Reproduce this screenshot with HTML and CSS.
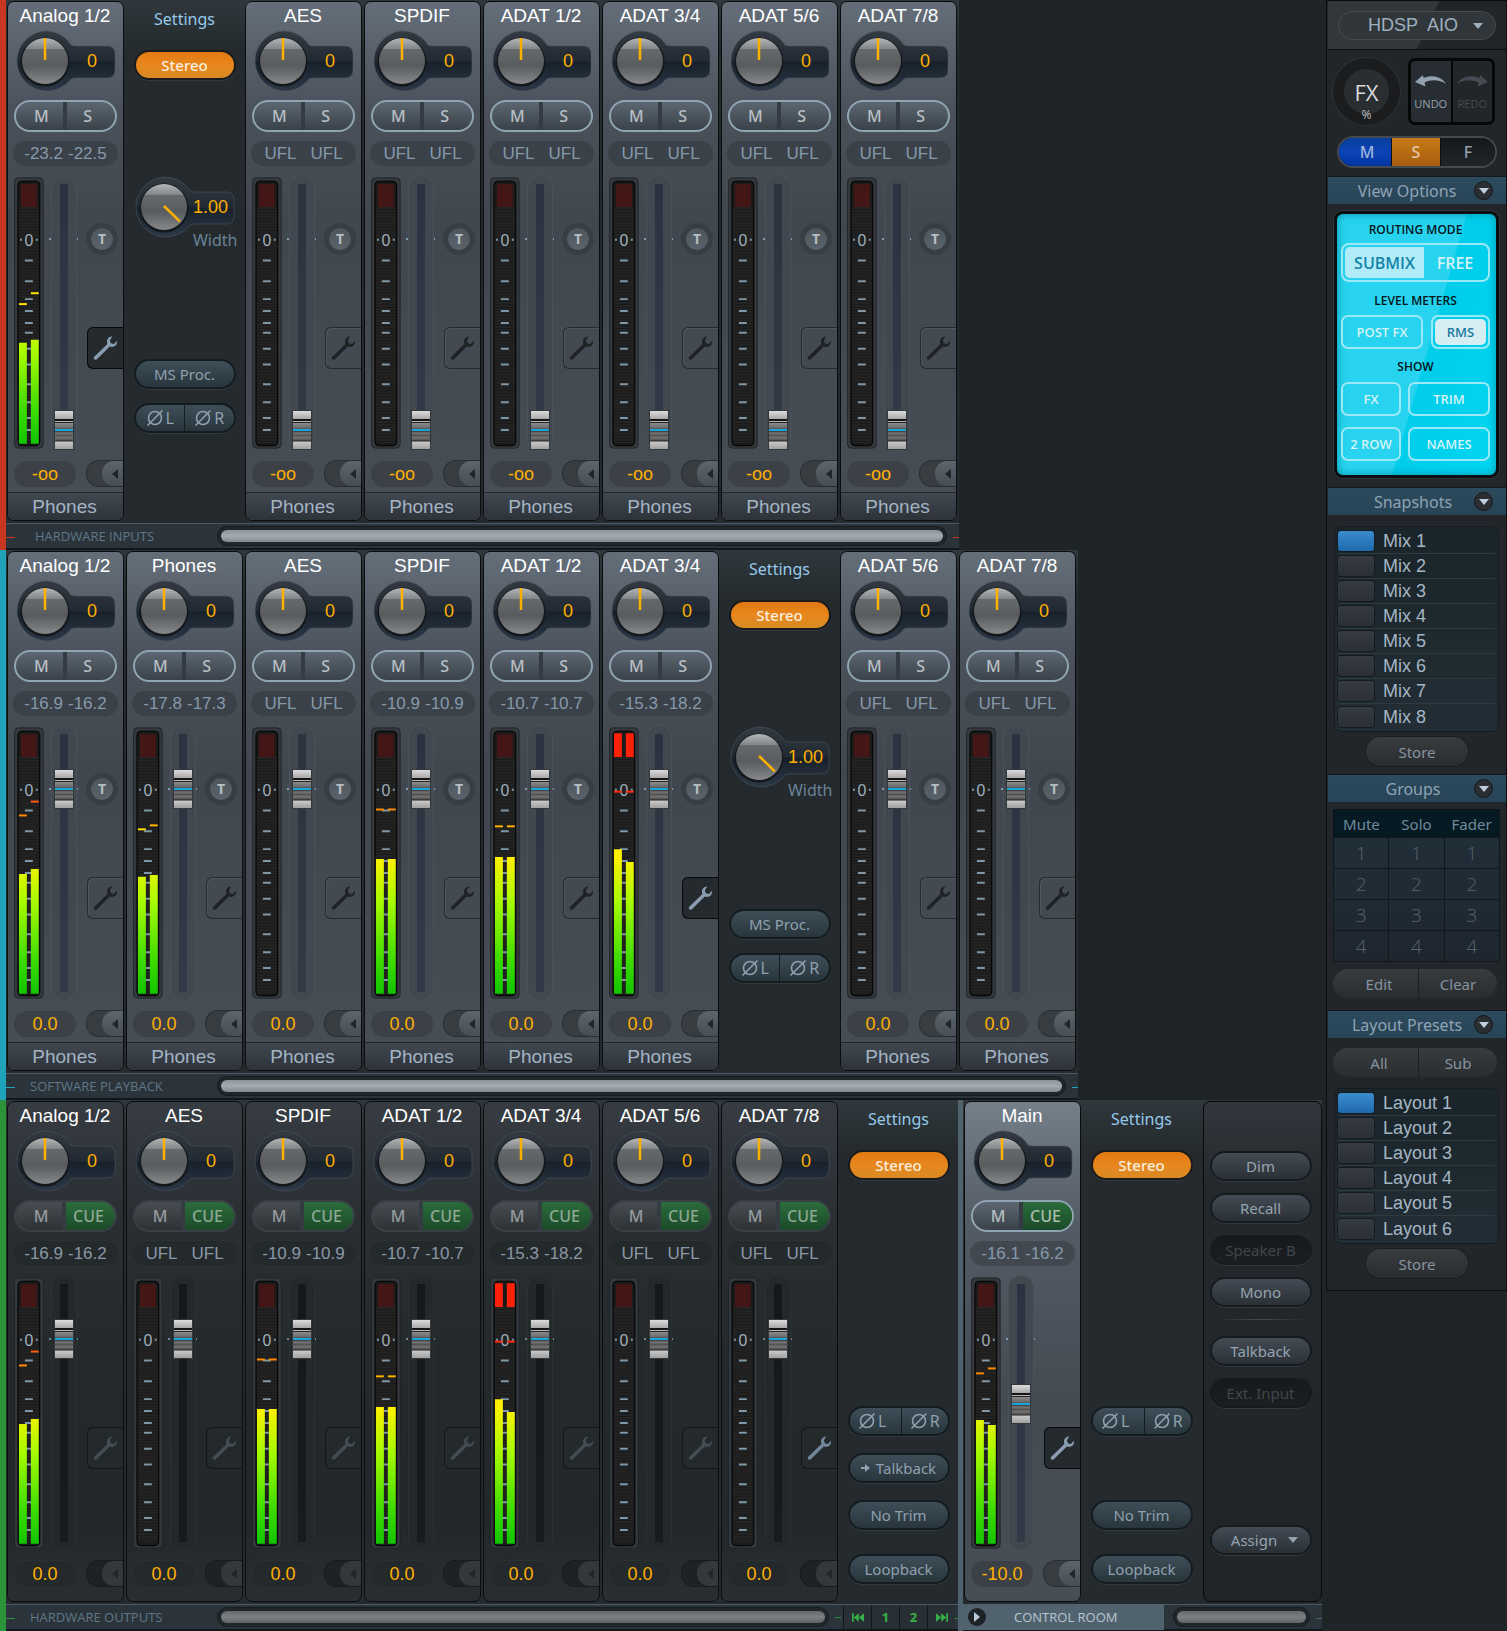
FILE: index.html
```html
<!DOCTYPE html>
<html lang="en">
<head>
<meta charset="utf-8">
<title>HDSP AIO Mixer</title>
<link rel="stylesheet" href="styles.css">
</head>
<body>
<svg class="defs" aria-hidden="true">
  <defs>
    <linearGradient id="g-level" gradientUnits="userSpaceOnUse" x1="0" y1="100" x2="0" y2="269">
      <stop offset="0" stop-color="#ffe600"/><stop offset=".18" stop-color="#fff000"/><stop offset=".45" stop-color="#a8fa00"/><stop offset=".8" stop-color="#3ddc00"/><stop offset="1" stop-color="#12c400"/>
    </linearGradient>
    <linearGradient id="g-knob" x1="0" y1="0" x2="0" y2="1">
      <stop offset="0" stop-color="#b4b6b7"/><stop offset=".23" stop-color="#83878a"/><stop offset=".25" stop-color="#65696c"/><stop offset=".6" stop-color="#585c5f"/><stop offset="1" stop-color="#868889"/>
    </linearGradient>
    <linearGradient id="g-socket" x1="0" y1="0" x2="0" y2="1">
      <stop offset="0" stop-color="#343a42"/><stop offset=".5" stop-color="#212932"/><stop offset=".52" stop-color="#18212a"/><stop offset="1" stop-color="#2c3848"/>
    </linearGradient>
    <pattern id="p-lines" width="22" height="3" patternUnits="userSpaceOnUse"><path d="M0 1h22" stroke="#2c2c2c"/></pattern>
    <symbol id="i-wrench" viewBox="0 0 26 26"><path d="M20 .5c-4 0-6.500 3.500-5 7.800L1.300 21.500c-1.600 2 .7 4.300 2.700 2.700L17.500 11c4 1.500 8-1 7.500-6l-3.300 3.300-3.200-.7-.9-3.200z"/></symbol>
    <symbol id="i-phase" viewBox="0 0 18 18"><circle cx="9" cy="9" r="6.500" fill="none" stroke="currentColor" stroke-width="1.600"/><path d="M1.500 16.500l15-15" stroke="currentColor" stroke-width="1.600"/></symbol>
    <symbol id="i-left" viewBox="0 0 8 10"><path d="M7 0v10L1 5z"/></symbol>
    <symbol id="i-down" viewBox="0 0 10 6"><path d="M0 0h10L5 6z"/></symbol>
    <symbol id="i-undo" viewBox="0 0 32 14"><path d="M0 8L8 1l.5 3C18 0 27 3 31 10 25 6 17 5 9.500 8.500l1 4z"/></symbol>
    <symbol id="i-prev" viewBox="0 0 14 10"><path d="M0 0h2v10H0zM8 0v10L2 5zM14 0v10L8 5z"/></symbol>
  </defs>
</svg>

<main class="mixer">
  <section class="bank inputs" aria-label="Hardware inputs">
    <div class="strips" id="inputs"></div>
    <footer class="bar"><h2>HARDWARE INPUTS</h2><div class="scroll"><span></span></div></footer>
  </section>

  <section class="bank playback" aria-label="Software playback">
    <div class="strips" id="playback"></div>
    <footer class="bar"><h2>SOFTWARE PLAYBACK</h2><div class="scroll"><span></span></div></footer>
  </section>

  <div class="bottom-row">
    <section class="bank outputs" aria-label="Hardware outputs">
      <div class="strips" id="outputs"></div>
      <footer class="bar"><h2>HARDWARE OUTPUTS</h2><div class="scroll"><span></span></div>
        <nav class="pager">
          <button aria-label="First"><svg width="12" height="9"><use href="#i-prev"/></svg></button>
          <button>1</button><button>2</button>
          <button aria-label="Last"><svg class="flip" width="12" height="9"><use href="#i-prev"/></svg></button>
        </nav>
      </footer>
    </section>

    <section class="bank control" aria-label="Control room">
      <div class="strips"><div class="slot" id="main"></div>
        <aside class="panel">
          <button class="pill grey">Dim</button>
          <button class="pill grey">Recall</button>
          <button class="pill grey" disabled>Speaker B</button>
          <button class="pill grey">Mono</button>
          <hr>
          <button class="pill grey">Talkback</button>
          <button class="pill grey" disabled>Ext. Input</button>
          <button class="pill grey assign">Assign <svg width="10" height="6"><use href="#i-down"/></svg></button>
        </aside>
      </div>
      <footer class="bar"><div class="room"><button aria-label="Expand"><svg class="flip" width="8" height="10"><use href="#i-left"/></svg></button><h2>CONTROL ROOM</h2></div><div class="scroll"><span></span></div></footer>
    </section>
  </div>
</main>

<aside class="side">
  <div class="device"><button>HDSP&nbsp; AIO <svg width="10" height="6"><use href="#i-down"/></svg></button></div>
  <div class="tools">
    <button class="fx"><b>FX</b><small>%</small></button>
    <div class="history">
      <button><svg width="32" height="14"><use href="#i-undo"/></svg>UNDO</button>
      <button disabled><svg class="flip" width="32" height="14"><use href="#i-undo"/></svg>REDO</button>
    </div>
  </div>
  <div class="msf"><button>M</button><button>S</button><button>F</button></div>

  <h2 class="head long"><span>View Options</span><button aria-label="Toggle view options"><svg width="10" height="6"><use href="#i-down"/></svg></button></h2>
  <div class="screen">
    <h3>ROUTING MODE</h3>
    <div class="mode"><button class="on">SUBMIX</button><button>FREE</button></div>
    <h3>LEVEL METERS</h3>
    <div class="meters"><button>POST FX</button><button class="on"><span>RMS</span></button></div>
    <h3>SHOW</h3>
    <div class="show"><button>FX</button><button>TRIM</button><button>2 ROW</button><button>NAMES</button></div>
  </div>

  <h2 class="head"><span>Snapshots</span><button aria-label="Toggle snapshots"><svg width="10" height="6"><use href="#i-down"/></svg></button></h2>
  <div class="list">
    <button class="on">Mix 1</button><button>Mix 2</button><button>Mix 3</button><button>Mix 4</button>
    <button>Mix 5</button><button>Mix 6</button><button>Mix 7</button><button>Mix 8</button>
  </div>
  <button class="store">Store</button>

  <h2 class="head"><span>Groups</span><button aria-label="Toggle groups"><svg width="10" height="6"><use href="#i-down"/></svg></button></h2>
  <table class="groups">
    <thead><tr><th>Mute</th><th>Solo</th><th>Fader</th></tr></thead>
    <tbody>
      <tr><td>1</td><td>1</td><td>1</td></tr>
      <tr><td>2</td><td>2</td><td>2</td></tr>
      <tr><td>3</td><td>3</td><td>3</td></tr>
      <tr><td>4</td><td>4</td><td>4</td></tr>
    </tbody>
  </table>
  <div class="pair"><button>Edit</button><button>Clear</button></div>

  <h2 class="head long"><span>Layout Presets</span><button aria-label="Toggle layout presets"><svg width="10" height="6"><use href="#i-down"/></svg></button></h2>
  <div class="pair presets"><button>All</button><button>Sub</button></div>
  <div class="list">
    <button class="on">Layout 1</button><button>Layout 2</button><button>Layout 3</button>
    <button>Layout 4</button><button>Layout 5</button><button>Layout 6</button>
  </div>
  <button class="store">Store</button>
</aside>
<script src="mixer.js"></script>
</body>
</html>
```
FILE: styles.css
```css
* { box-sizing: border-box; }
:root {
  --narrow: "Open Sans", "Noto Sans", sans-serif;
  --ui: "Noto Sans", "Open Sans", sans-serif;
  --lcd: "Liberation Sans", Arial, sans-serif;
}
body {
  margin: 0;
  display: flex;
  align-items: flex-start;
  background: #1f2427;
  color: #9fb0bf;
  font: 15px/20px var(--ui);
}
h2, h3 { margin: 0; font-weight: 400; }
button { margin: 0; padding: 0; border: 0; background: none; color: inherit; font: inherit; }
svg { display: block; fill: currentColor; }
.defs { position: absolute; width: 0; height: 0; }
.flip { transform: scaleX(-1); }

/* banks */
.mixer { flex: 1; min-width: 0; }
.bank { width: fit-content; border-left: 6px solid var(--accent); background: #242a2d; }
.inputs { --accent: #c8371f; }
.playback { --accent: #1fa3bb; }
.outputs { --accent: #2c9438; }
.control { --accent: #51626f; border-left-width: 5px; }
.bottom-row { display: flex; }
.strips { display: flex; gap: 2px; padding: 1px 0 2px 1px; background: linear-gradient(#30383d, #242a2d 50px); }
.inputs .strips, .playback .strips { padding-right: 2px; }
.outputs .strips { padding-right: 1px; }
.slot { display: flex; gap: 2px; padding-right: 1px; }

.bar {
  display: flex;
  align-items: center;
  height: 27px;
  border-top: 1px solid #4a5a66;
  border-bottom: 2px solid #11171b;
  background:
    linear-gradient(var(--accent), var(--accent)) 0 13px / 9px 1px no-repeat,
    linear-gradient(var(--accent), var(--accent)) 100% 13px / 6px 1px no-repeat,
    #2b343a;
}
.bar h2 { width: 211px; padding-left: 29px; color: #5f7787; font: 13px/24px var(--narrow); white-space: nowrap; }
.playback .bar h2, .outputs .bar h2 { padding-left: 24px; }
.scroll { flex: 1; height: 20px; margin-right: 12px; padding: 3px; border: 1px solid #161c20; border-radius: 10px; background: #20272b; }
.scroll span { display: block; height: 12px; border-radius: 6px; background: linear-gradient(#8d939c, #a5a9b2 50%, #83878f); }
.bottom-row .scroll span { background: linear-gradient(#65696c, #7d7f81 50%, #606264); }
.pager { display: flex; height: 24px; margin-right: 3px; align-items: stretch; }
.pager::before { content: ""; align-self: center; width: 6px; height: 1px; margin-right: 2px; background: var(--accent); }
.pager button { display: grid; place-items: center; width: 28px; border-left: 1px solid #11171b; color: #35b045; font: 700 13px/20px var(--ui); background: #283036; }
.room { display: flex; align-items: center; width: 201px; height: 26px; background: #51626f; }
.room button { display: grid; place-items: center; width: 18px; height: 18px; margin-left: 5px; border-radius: 50%; background: #1c2226; color: #b9c9d8; }
.control .room h2 { width: auto; color: #b7c6d1; padding-left: 28px; }
.outputs .scroll { margin-right: 6px; }
.control .scroll { margin-left: 9px; }

/* channel */
.channel {
  display: flex;
  flex-direction: column;
  width: 117px;
  padding-left: 6px;
  border: 1px solid #0a0c0e;
  border-radius: 7px;
  background: linear-gradient(#646e79, #4a515a 110px, #41474e 220px, #454b53 400px, #484e56);
  overflow: hidden;
}
.outputs .channel { height: 501px; background: linear-gradient(#363c42, #2a2f34 110px, #24292c 250px, #22272a 420px, #2a2e32); }
.control .channel { height: 501px; background: linear-gradient(#747f8a, #525a63 130px, #454b53 300px, #484e55); }
.name { height: 28px; margin-left: -7px; color: #fff; font: 19px/28px var(--lcd); text-align: center; white-space: nowrap; }
.knob { display: grid; width: 106px; height: 62px; }
.knob > * { grid-area: 1 / 1; }
.knob output { align-self: center; justify-self: end; width: 50px; padding-right: 6px; text-align: center; color: #ffb000; font: 18px/20px var(--lcd); }
.ms {
  display: flex;
  width: 103px;
  height: 32px;
  margin-top: 8px;
  border: 2px solid #8fa5b3;
  border-radius: 16px;
  background: linear-gradient(#5d6771, #39424a);
  overflow: hidden;
}
.ms button { flex: 1; color: #b9bfc4; font-size: 16px; font-weight: 500; }
.ms button:first-child { padding-left: 4px; border-right: 4px solid #343b42; }
.ms button:last-child { padding-right: 6px; }
.ms .cue { flex: 0 0 49px; padding-left: 2px; background: linear-gradient(#2b6d3c, #1b4a28); color: #a9bcae; }
.outputs .ms { border-color: #3a4045; background: linear-gradient(#484d52, #2e3235); color: #969ca0; }
.outputs .ms button { color: #969ca0; }
.outputs .ms .cue { color: #8da894; }
.db { display: flex; justify-content: center; gap: 5px; width: 105px; height: 25px; margin-top: 9px; margin-left: -1px; border-radius: 13px; background: #3b4148; color: #8599ab; font: 17px/25px var(--lcd); white-space: nowrap; }
.db.idle { gap: 14px; }
.outputs .db { background: #24292c; box-shadow: 0 0 0 1px #2b3033; color: #8a98a5; }
.control .db { background: #42484f; }
.mid { display: flex; height: 274px; margin-top: 10px; }
.groove { display: grid; justify-items: center; width: 30px; height: 274px; margin-left: 5px; background: linear-gradient(#7f9db0, #7f9db0) 0 62px / 30px 2px no-repeat; }
.groove::before { content: ""; grid-area: 1 / 1; width: 24px; border-radius: 12px; background: #42484f; box-shadow: 0 0 0 1px #4b525a; }
.fader { grid-area: 1 / 1; appearance: none; writing-mode: vertical-lr; direction: rtl; width: 20px; height: 266px; margin: 8px 0 0; background: linear-gradient(#2b3340, #323947) 6px 0 / 8px 258px no-repeat; }
.fader::-webkit-slider-thumb {
  appearance: none;
  width: 20px;
  height: 40px;
  border: 1px solid #33383c;
  background: linear-gradient(#dcdcdc, #a8a8a8 8px, #141414 8px, #141414 10px, #c0c0c0 10px, #b0b0b0 11px, #222 11px, #222 12px, #8c8c8c 12px, #6a6a6f 17px, #4a4a4e 18px, #17a6dc 18px, #17a6dc 20px, #333 20px, #777 22px, #4d4d4d 25px, #787878 26px, #555 29px, #222 30px, #c8c8c8 31px, #a0a0a0);
}
.outputs .groove { background-image: linear-gradient(#6b8697, #6b8697); }
.outputs .groove::before { background: #23282b; box-shadow: 0 0 0 1px #2b3033; }
.outputs .fader { background-image: linear-gradient(#14181c, #171b1f); }
.right { display: flex; flex-direction: column; align-items: flex-end; justify-content: flex-end; width: 45px; padding-bottom: 81px; }
.talk { width: 32px; height: 32px; margin: 0 5px 72px 0; border: 5px solid #383e44; border-radius: 50%; background: linear-gradient(#4a525a, #5d666e) border-box; background-clip: padding-box; color: #b6bec4; font: 700 14px/20px var(--ui); }
.tab { display: grid; place-items: center; width: 36px; height: 42px; border: 1px solid #262b30; border-right: 0; border-radius: 6px 0 0 6px; color: #1f2326; background: #444a52; box-shadow: inset 1px 1px 0 #4f565e; }
.tab.open { border-color: #07090a; background: #242a2d; color: #8a9db0; box-shadow: none; }
.outputs .tab { background: #24292c; color: #444c54; border-color: #14171a; box-shadow: none; }
.outputs .tab.open { color: #71879a; }
.low { display: flex; justify-content: space-between; align-items: center; margin-top: 10px; }
.gain { width: 62px; height: 26px; border-radius: 13px; background: #3c4148; color: #ffb000; font: 18px/26px var(--lcd); text-align: center; }
.more { display: flex; justify-content: flex-end; width: 37px; height: 27px; border: 1px solid #2a2f34; border-right: 0; border-radius: 13px 0 0 13px; background: #383d42; }
.more button { display: grid; place-items: center; width: 21px; padding-left: 4px; border-radius: 12px 0 0 12px; background: linear-gradient(#5d656d, #474e55); color: #22262a; }
.outputs .gain { background: #24292c; box-shadow: 0 0 0 1px #2b3033; }
.outputs .more { background: #1e2225; border-color: #181b1e; }
.outputs .more button { background: #33383c; }
.route { height: 28px; margin: 5px 0 0 -6px; padding-right: 2px; border-top: 1px solid #23272c; background: linear-gradient(#414850, #2e333a); color: #a3b4c4; font: 19px/26px var(--lcd); }

/* settings column */
.settings { display: flex; flex-direction: column; align-items: center; width: 117px; padding-top: 8px; color: #8da2b4; }
.settings h3 { color: #95c9ea; font-size: 16px; line-height: 20px; }
.pill { display: flex; align-items: center; justify-content: center; width: 102px; height: 30px; border: 2px solid #151c20; border-radius: 15px; box-shadow: 0 1px 0 #323a3e; background: linear-gradient(#3e4e58, #28353c); color: #8fa0ae; font-size: 15px; }
.pill.stereo { margin: 21px 0 96px; border-color: #1b1b1c; background: linear-gradient(#e27912, #e8871d 50%, #d98a25); color: #fbeedd; font-weight: 500; }
.settings .knob { margin-left: 2px; }
.settings .caption { width: 106px; margin: -8px 0 109px; color: #6a8296; text-align: right; font-size: 16px; }
.phase { justify-content: stretch; margin-top: 14px; }
.phase button { flex: 1; display: flex; align-items: center; justify-content: center; gap: 2px; height: 26px; font-size: 16px; }
.phase button + button { border-left: 1px solid #151c20; }
.short .stereo { margin-bottom: 209px; }
.stack { display: flex; flex-direction: column; }
.stack .pill { margin-top: 17px; gap: 6px; }
.stack .pill:last-child { margin-top: 24px; }
.stack .gap { margin-top: 64px; }

/* control room panel */
.panel { display: flex; flex-direction: column; align-items: center; gap: 12px; width: 119px; padding: 49px 4px 0 0; border: 1px solid #07090a; border-radius: 7px; background: linear-gradient(#32373d, #24282c 90px, #202427); }
.panel .grey { background: linear-gradient(#434b54, #2b3036); color: #94a3b0; }
.panel .grey:disabled { background: linear-gradient(#17191c, #1c1f22); color: #3f464c; }
.panel hr { width: 90px; height: 1px; margin: 0 0 4px; border: 0; background: linear-gradient(90deg, #23282b, #454c52, #23282b); }
.panel .assign { margin-top: 105px; gap: 11px; padding-left: 8px; }

/* sidebar */
.side { width: 181px; padding: 0 0 4px 1px; border: 1px solid #0a0c0e; background: #22262a; }
.side button { color: #8593a1; }
.device { display: grid; place-items: center; height: 49px; padding-top: 1px; border-bottom: 1px solid #0a0c0e; background: linear-gradient(115deg, #32373a 55%, #212528 56%); }
.side .device button { display: flex; align-items: center; justify-content: flex-end; gap: 15px; width: 158px; height: 29px; padding-right: 12px; border: 1px solid #454b50; border-radius: 15px; background: #30363a; color: #9fb0bf; font: 18px/27px var(--lcd); }
.tools { display: flex; justify-content: space-between; align-items: center; padding: 8px 11px 0 5px; }
.fx { width: 67px; height: 67px; border: 11px solid #1a1c1e; border-radius: 50%; background: #2b2e31; box-shadow: 0 0 0 1px #303438; display: flex; flex-direction: column; align-items: center; justify-content: center; }
.side .fx b { color: #d6dadd; font: 22px/32px var(--narrow); padding-top: 14px; }
.fx small { font-size: 12px; line-height: 14px; color: #b0b4b8; }
.history { display: flex; width: 87px; height: 67px; padding: 1px; border: 2px solid #060708; border-radius: 7px; background: #060708; gap: 2px; }
.history button { flex: 1 0 0; min-width: 0; display: flex; flex-direction: column; align-items: center; gap: 8px; padding-top: 13px; border-radius: 4px 0 0 4px; background: #282d33; color: #93a2b1; font: 11px/16px var(--narrow); }
.side .history button:disabled { border-radius: 0 4px 4px 0; background: #222629; color: #444b52; }
.msf { display: flex; width: 160px; height: 32px; margin: 11px 0 8px 9px; border: 2px solid #444a4f; border-radius: 16px; background: #0c0e10; overflow: hidden; gap: 1px; }
.side .msf button { flex: 0 0 54px; font-size: 16px; font-weight: 500; background: linear-gradient(#14181b, #202528); color: #94a0ab; }
.side .msf button:nth-child(1) { flex-basis: 52px; padding-left: 4px; background: linear-gradient(#0a3f9e, #0a44b4 50%, #0034a0); color: #9fb3dd; }
.side .msf button:nth-child(2) { flex-basis: 48px; background: linear-gradient(#c67c16, #a85c0e); color: #e4c7a6; }
.head { display: flex; align-items: center; height: 28px; padding-right: 13px; border-top: 1px solid #14181b; background: linear-gradient(#2d4b5e, #284457); color: #8fa3b4; font-size: 16px; line-height: 26px; }
.head span { flex: 1; padding-left: 24px; text-align: center; white-space: nowrap; }
.head.long span { padding-left: 12px; }
.side .head button { display: grid; place-items: center; width: 19px; height: 19px; border: 1px solid #14181b; border-radius: 50%; background: #2b2e32; color: #c0cee0; }
.screen { margin: 7px 7px 9px 6px; padding: 5px 6px 14px 4px; border: 3px solid #0b0f11; border-radius: 9px; background: linear-gradient(106deg, #27d3ee 55%, #00cdea 56%, #02d6f2); box-shadow: 0 0 0 1px #30363a, inset 0 0 8px #0792a8; }
.screen h3 { color: #04141a; font: 600 12px/22px var(--narrow); text-align: center; }
.side .screen button { height: 34px; border: 2px solid #9be9f6; border-radius: 7px; color: #d5f2f7; font: 600 13px/20px var(--narrow); }
.screen .mode { display: flex; height: 39px; padding: 2px; margin: 2px 0 8px; border: 2px solid #9be9f6; border-radius: 8px; }
.side .screen .mode button { flex: 1; height: 31px; border: 0; font-size: 16px; }
.side .screen .mode .on { flex: 0 0 79px; border-radius: 5px 0 0 5px; background: #b2ebf8; color: #1283a8; }
.screen .meters { display: grid; grid-template-columns: 82px 59px; justify-content: space-between; margin: 3px 0 7px; }
.screen .meters .on { padding: 2px; }
.screen .meters span { display: block; height: 26px; border-radius: 5px; background: #d6edf2; color: #1c7ba0; line-height: 26px; }
.screen .show { display: grid; grid-template-columns: 60px 82px; justify-content: space-between; row-gap: 11px; margin-top: 4px; }
.list { display: flex; flex-direction: column; margin: 11px 7px 5px 6px; padding: 2px 3px; border: 1px solid #151b1e; border-radius: 7px; background: linear-gradient(#19252a, #232d35); }
.side .list button { display: flex; align-items: center; gap: 9px; height: 25px; border-bottom: 1px solid #2c3a42; color: #a6b6c4; font: 18px/24px var(--lcd); }
.side .list button:last-child { border-bottom: 0; }
.list button::before { content: ""; width: 36px; height: 20px; border-radius: 3px; background: linear-gradient(#363a42, #2b2f36); box-shadow: 0 0 0 1px #161b1f; }
.list .on::before { background: linear-gradient(#3a8ccc, #1f69ad); }
.store { display: block; width: 102px; height: 29px; margin: 0 auto 8px; border-radius: 15px; background: linear-gradient(#393c3e, #2a2d2f); box-shadow: 0 0 0 1px #1a1d20; }
.groups { width: 167px; margin: 7px 6px 7px 5px; border-collapse: collapse; border: 1px solid #0d1418; background: linear-gradient(#21303a, #1e262e); text-align: center; }
.groups th { width: 55px; height: 28px; padding: 0; background: #061a24; color: #6f8b9b; font-weight: 400; font-size: 15px; }
.groups td { height: 31px; padding: 0; border: 1px solid #10181d; color: #56636e; font: 300 19px/28px var(--narrow); }
.pair { display: flex; gap: 1px; margin: 0 9px 12px 5px; border-radius: 15px; overflow: hidden; background: #1c1f21; }
.pair button { flex: 1; height: 29px; background: linear-gradient(#393c3e, #2a2d2f); }
.pair button:first-child { padding-left: 7px; }
.presets { margin: 10px 9px 9px 5px; }
```
FILE: mixer.js
```js
// Levels are pixel rows inside the 274px meter; gain is fader travel in pixels (0 dB = 191).
const TICKS = [84, 105, 123, 135, 147, 157, 173, 189, 209, 227, 243, 255];
const HOT = '#ff2a12', ORANGE = '#ff8a00', YELLOW = '#ffe000';

const idle = { db: ['UFL', 'UFL'] };
const analog = { db: ['-16.9', '-16.2'], level: [148, 143], peak: [[89, ORANGE], [75, '#ff5a10']] };
const spdif = { db: ['-10.9', '-10.9'], level: [133, 133], peak: [[83, ORANGE], [83, ORANGE]] };
const adat12 = { db: ['-10.7', '-10.7'], level: [131, 131], peak: [[100, '#ffb400'], [100, '#ffb400']] };
const adat34 = { db: ['-15.3', '-18.2'], level: [123, 136], peak: [[65, HOT], [65, HOT]], clip: true };
const open = { open: true };

const banks = {
  inputs: {
    base: { route: 'Phones', second: 'S', talk: true, gain: 0, value: '-oo' },
    strips: [
      { name: 'Analog 1/2', db: ['-23.2', '-22.5'], level: [167, 164], peak: [[128, YELLOW], [117, YELLOW]], ...open },
      'full',
      ...['AES', 'SPDIF', 'ADAT 1/2', 'ADAT 3/4', 'ADAT 5/6', 'ADAT 7/8'].map(name => ({ name, ...idle })),
    ],
  },
  playback: {
    base: { route: 'Phones', second: 'S', talk: true, gain: 191, value: '0.0' },
    strips: [
      { name: 'Analog 1/2', ...analog },
      { name: 'Phones', db: ['-17.8', '-17.3'], level: [151, 149], peak: [[103, YELLOW], [99, '#ffb400']] },
      { name: 'AES', ...idle },
      { name: 'SPDIF', ...spdif },
      { name: 'ADAT 1/2', ...adat12 },
      { name: 'ADAT 3/4', ...adat34, ...open },
      'full',
      { name: 'ADAT 5/6', ...idle },
      { name: 'ADAT 7/8', ...idle },
    ],
  },
  outputs: {
    base: { second: 'CUE', gain: 191, value: '0.0' },
    strips: [
      { name: 'Analog 1/2', ...analog },
      { name: 'AES', ...idle },
      { name: 'SPDIF', ...spdif },
      { name: 'ADAT 1/2', ...adat12 },
      { name: 'ADAT 3/4', ...adat34 },
      { name: 'ADAT 5/6', ...idle },
      { name: 'ADAT 7/8', ...idle, ...open },
      'talkback',
    ],
  },
  main: {
    base: { second: 'CUE', gain: 126, value: '-10.0' },
    strips: [
      { name: 'Main', db: ['-16.1', '-16.2'], level: [144, 149], peak: [[97, ORANGE], [92, ORANGE]], ...open },
      'short',
    ],
  },
};

const knob = (value, angle) => `
  <div class="knob">
    <svg width="106" height="62" viewBox="0 0 106 62">
      <path d="M31 1a30 30 0 0 1 26 14q2 1 5 1h31q8 0 8 8v16q0 8-8 8H62q-3 0-5 1A30 30 0 1 1 31 1z" fill="url(#g-socket)" stroke="#4d555e" stroke-opacity=".6"/>
      <circle cx="31" cy="32" r="24.500" fill="#14181b"/>
      <circle cx="31" cy="31" r="23" fill="url(#g-knob)"/>
      <path d="M31 30V8" transform="rotate(${angle} 31 30)" stroke="#ffb000" stroke-width="2.500"/>
    </svg>
    <output>${value}</output>
  </div>`;

const bar = (x, y) => y ? `<path d="M${x} ${y}h8V269h-8z" fill="url(#g-level)"/>` : '';
const peak = (x, p) => p ? `<path d="M${x} ${p[0]}h8" stroke="${p[1]}" stroke-width="2"/>` : '';

const meter = s => {
  const level = s.level || [], peaks = s.peak || [];
  const ticks = TICKS.map(y => `M11 ${y}h8`).join('');
  return `
  <svg class="meter" width="30" height="274" viewBox="0 0 30 274">
    <rect x=".5" y=".5" width="29" height="273" rx="4" fill="#33383c" stroke="#1c1f22" stroke-opacity=".7"/>
    <rect x="4" y="4" width="22" height="267" rx="4" fill="#1a1a1a" stroke="#000"/>
    <rect x="5" y="30" width="20" height="238" fill="url(#p-lines)"/>
    ${s.clip ? '<path d="M5 6h8v24H5zM17 6h8v24h-8z" fill="#ff2008"/>' : '<path d="M7 7h16v23H7z" fill="#451616"/>'}
    <path d="${ticks}" stroke="#7f97a6" stroke-width="2"/>
    ${bar(5, level[0])}${bar(17, level[1])}
    <path d="M6 63h2M22 63h2" stroke="#7f97a6" stroke-width="2"/>
    <text x="15" y="69" text-anchor="middle" font-family="Liberation Sans, sans-serif" font-size="16" fill="#9fb0bd">0</text>
    ${peak(5, peaks[0])}${peak(17, peaks[1])}
  </svg>`;
};

const channel = s => `
  <article class="channel">
    <div class="name">${s.name}</div>
    ${knob('0', 0)}
    <div class="ms"><button>M</button><button class="${s.second === 'CUE' ? 'cue' : 'solo'}">${s.second}</button></div>
    <div class="db${s.level ? '' : ' idle'}"><span>${s.db[0]}</span><span>${s.db[1]}</span></div>
    <div class="mid">
      ${meter(s)}
      <div class="groove"><input class="fader" type="range" min="0" max="226" value="${s.gain}" aria-label="${s.name} fader"></div>
      <div class="right">
        ${s.talk ? '<button class="talk">T</button>' : ''}
        <button class="tab${s.open ? ' open' : ''}" aria-label="${s.name} settings"><svg width="25" height="25"><use href="#i-wrench"/></svg></button>
      </div>
    </div>
    <div class="low">
      <div class="gain">${s.value}</div>
      <div class="more"><button aria-label="Collapse"><svg width="8" height="10"><use href="#i-left"/></svg></button></div>
    </div>
    ${s.route ? `<button class="route">${s.route}</button>` : ''}
  </article>`;

const icon = '<svg width="18" height="18"><use href="#i-phase"/></svg>';
const phase = `<div class="pill phase"><button>${icon}L</button><button>${icon}R</button></div>`;

const settings = kind => kind === 'full' ? `
  <aside class="settings">
    <h3>Settings</h3>
    <button class="pill stereo">Stereo</button>
    ${knob('1.00', 134)}
    <div class="caption">Width</div>
    <button class="pill">MS Proc.</button>
    ${phase}
  </aside>` : `
  <aside class="settings short">
    <h3>Settings</h3>
    <button class="pill stereo">Stereo</button>
    <div class="stack">
      ${phase}
      ${kind === 'talkback' ? '<button class="pill"><svg width="9" height="8" viewBox="0 0 9 8"><path d="M0 3h4V0l5 4-5 4V5H0z"/></svg>Talkback</button>' : ''}
      <button class="pill${kind === 'short' ? ' gap' : ''}">No Trim</button>
      <button class="pill">Loopback</button>
    </div>
  </aside>`;

for (const [id, bank] of Object.entries(banks)) {
  document.getElementById(id).innerHTML = bank.strips
    .map(s => typeof s === 'string' ? settings(s) : channel({ ...bank.base, ...s }))
    .join('');
}
```
